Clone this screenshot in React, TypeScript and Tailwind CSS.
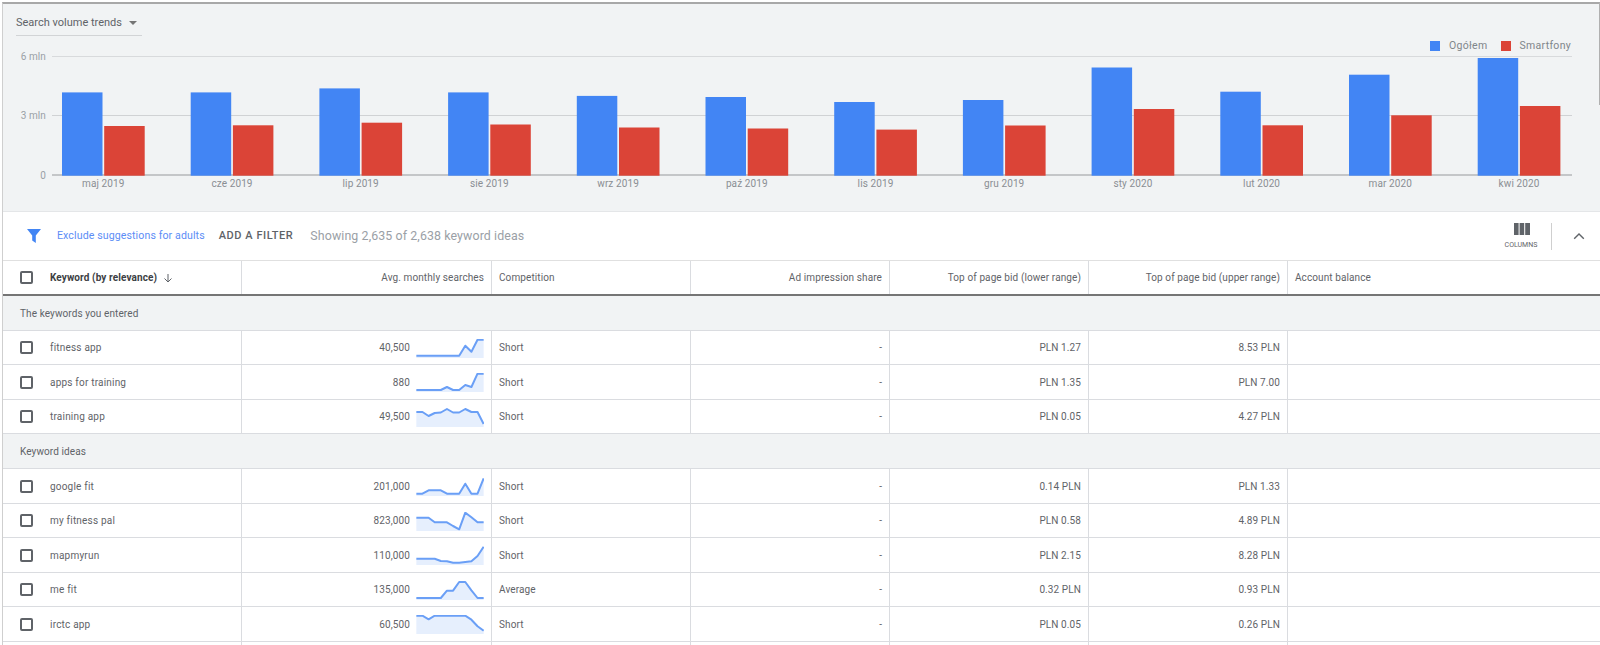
import React from "react";

const months = ["maj 2019", "cze 2019", "lip 2019", "sie 2019", "wrz 2019", "paź 2019", "lis 2019", "gru 2019", "sty 2020", "lut 2020", "mar 2020", "kwi 2020"];
const blueTops = [92.4, 92.4, 88.4, 92.4, 95.9, 97, 102, 100, 67.5, 91.7, 74.7, 58];
const redTops = [126, 125.3, 122.7, 124.5, 127.5, 128.5, 129.6, 125.5, 109, 125.3, 115.3, 106];
const BASE = 175.7;

const gridCols = "grid grid-cols-[239px_250px_199px_199px_199px_199px_1fr]";

type Row = { k: string; n: string; s: number[]; c: string; a: string; lo: string; hi: string };

const first: Row[] = [
  { k: "fitness app", n: "40,500", s: [16.7, 16.7, 16.7, 16.7, 16.7, 16.7, 16.7, 16.7, 6.7, 12.7, 0.7, 0.7], c: "Short", a: "-", lo: "PLN 1.27", hi: "8.53 PLN" },
  { k: "apps for training", n: "880", s: [17, 17, 17, 17, 17, 14, 17, 17, 12, 14, 0.7, 0.7], c: "Short", a: "-", lo: "PLN 1.35", hi: "PLN 7.00" },
  { k: "training app", n: "49,500", s: [4, 4, 8, 5, 4.5, 1, 4.5, 4.5, 1, 4, 4, 16], c: "Short", a: "-", lo: "PLN 0.05", hi: "4.27 PLN" },
];
const ideas: Row[] = [
  { k: "google fit", n: "201,000", s: [16.7, 16.7, 13.3, 13.3, 13.3, 16.7, 16.7, 16.7, 6.7, 16.7, 16.7, 1.3], c: "Short", a: "-", lo: "0.14 PLN", hi: "PLN 1.33" },
  { k: "my fitness pal", n: "823,000", s: [5.7, 5.7, 5.7, 10.3, 10.3, 10.3, 14, 17.3, 0.7, 5.3, 10.3, 10.3], c: "Short", a: "-", lo: "PLN 0.58", hi: "4.89 PLN" },
  { k: "mapmyrun", n: "110,000", s: [12.7, 12.7, 12.7, 12.7, 15, 15.3, 16.7, 16.7, 16, 15.3, 10, 0.7], c: "Short", a: "-", lo: "PLN 2.15", hi: "8.28 PLN" },
  { k: "me fit", n: "135,000", s: [17, 17, 17, 17, 17, 9.7, 9.7, 1, 1, 9.3, 17, 17], c: "Average", a: "-", lo: "0.32 PLN", hi: "0.93 PLN" },
  { k: "irctc app", n: "60,500", s: [0.7, 0.7, 4.3, 0.7, 0.7, 0.7, 0.7, 0.7, 0.7, 4.7, 11.3, 15.7], c: "Short", a: "-", lo: "PLN 0.05", hi: "0.26 PLN" },
];

function Check() {
  return <span className="block w-[13px] h-[13px] border-2 border-[#5f6368] rounded-[2px] bg-white shrink-0" />;
}

function Spark({ v }: { v: number[] }) {
  const pts = v.map((y, i) => `${(i * 67.3) / 11},${y}`).join(" ");
  return (
    <svg width="68" height="19" viewBox="0 0 67.3 19" className="shrink-0 block mt-[1px]">
      <polygon points={`0,19 ${pts} 67.3,19`} fill="#e6effd" />
      <polyline points={pts} fill="none" stroke="#6a9ff6" strokeWidth="2" strokeLinejoin="round" />
    </svg>
  );
}

function DataRow({ r }: { r: Row }) {
  const cell = "flex items-center border-r border-[#dadce0] min-w-0 pt-[0.6px]";
  return (
    <div className={`${gridCols} h-[34.6px] border-b border-[#dadce0] text-[#5f6368]`}>
      <div className={`${cell} pl-[17px] gap-[17px]`}>
        <Check />
        <span className="tracking-[0.2px]">{r.k}</span>
      </div>
      <div className={`${cell} justify-end pr-[7px] gap-[6px]`}>
        <span>{r.n}</span>
        <Spark v={r.s} />
      </div>
      <div className={`${cell} pl-[7px]`}>{r.c}</div>
      <div className={`${cell} justify-end pr-[7px]`}>{r.a}</div>
      <div className={`${cell} justify-end pr-[7px]`}>{r.lo}</div>
      <div className={`${cell} justify-end pr-[7px]`}>{r.hi}</div>
      <div />
    </div>
  );
}

function GroupRow({ label }: { label: string }) {
  return (
    <div className="h-[34.6px] bg-[#f1f3f4] border-b border-[#dadce0] flex items-center pl-[17px] pt-[1.5px] text-[#5f6368]">
      {label}
    </div>
  );
}

export default function App() {
  const head = "flex items-center border-r border-[#dadce0]";
  return (
    <div className="relative h-[645px] w-full overflow-hidden bg-white pt-[2px] font-['Roboto',sans-serif] text-[10px] tracking-[0.1px]">
      <div className="border-t-2 border-t-[#a8a8a8] border-l border-l-[#cfcfcf] ml-[2px] h-[643px] overflow-hidden">
        {/* Chart panel */}
        <section className="bg-[#f1f3f4] h-[208px] border-b border-[#e4e6e8]">
          <div className="ml-[13px] w-[126px] h-[32px] border-b border-[#d2d4d6] flex items-center gap-[7px] text-[11px] text-[#5f6368] tracking-normal pt-[7px]">
            <span>Search volume trends</span>
            <svg width="8" height="4" viewBox="0 0 8 4" className="block">
              <path d="M0 0h8L4 4z" fill="#757575" />
            </svg>
          </div>
          <div className="h-[18px] flex items-center justify-end pr-[29px] text-[#80868b] text-[10.5px] tracking-[0.3px] gap-[9px] pt-[2px]">
            <span className="flex items-center gap-[9px]">
              <span className="block w-[10px] h-[10px] bg-[#4285f4]" />
              Ogółem
            </span>
            <span className="flex items-center gap-[8px] ml-[5px]">
              <span className="block w-[10px] h-[10px] bg-[#db4437]" />
              Smartfony
            </span>
          </div>
          <svg width="1597" height="157" viewBox="3 54 1597 157" className="block overflow-visible">
            <line x1="52" x2="1572" y1="56.5" y2="56.5" stroke="#d8dadc" />
            <line x1="52" x2="1572" y1="115.5" y2="115.5" stroke="#d0d2d4" />
            <line x1="52" x2="1572" y1="175" y2="175" stroke="#c4c6c8" strokeWidth="2" />
            {[["6 mln", 56], ["3 mln", 115], ["0", 175]].map(([t, y]) => (
              <text key={t as string} x="46" y={(y as number) + 3.5} textAnchor="end" fontSize="10" fill="#9aa0a6" fontFamily="Roboto, sans-serif">
                {t}
              </text>
            ))}
            {months.map((m, i) => {
              const x = 62 + i * 128.7;
              return (
                <g key={m}>
                  <rect x={x} y={blueTops[i]} width="40.5" height={BASE - blueTops[i]} fill="#4285f4" />
                  <rect x={x + 42.2} y={redTops[i]} width="40.5" height={BASE - redTops[i]} fill="#db4437" />
                  <text x={x + 41.3} y="187" textAnchor="middle" fontSize="10" letterSpacing="0.1" fill="#8a8e93" fontFamily="Roboto, sans-serif">
                    {m}
                  </text>
                </g>
              );
            })}
          </svg>
        </section>

        {/* Filter bar */}
        <div className="h-[49px] border-b border-[#e0e0e0] flex items-center pl-[24px] pr-[15px] bg-white">
          <svg width="14" height="14" viewBox="0 0 14 14" className="block shrink-0 -mt-[1px]">
            <path d="M0 0h14L8.8 6.6V14L5.2 11.6V6.6z" fill="#4285f4" />
          </svg>
          <span className="ml-[16px] text-[10.6px] text-[#5c8df6]">Exclude suggestions for adults</span>
          <span className="ml-[14px] text-[11px] font-medium tracking-[0.55px] text-[#5f6368]">ADD A FILTER</span>
          <span className="ml-[17px] text-[12.4px] text-[#9aa0a6] tracking-[0.1px]">Showing 2,635 of 2,638 keyword ideas</span>
          <div className="ml-auto flex items-center">
            <div className="flex flex-col items-center w-[34px]">
              <svg width="16" height="12" viewBox="0 0 16 12" className="block ml-[2px]">
                <path d="M0 0h4.6v12H0zM5.6 0h4.6v12H5.6zM11.2 0H16v12h-4.8z" fill="#5f6368" />
              </svg>
              <span className="mt-[7px] text-[7px] leading-none text-[#5f6368] tracking-normal">COLUMNS</span>
            </div>
            <div className="w-[1px] h-[27px] bg-[#cfcfcf] ml-[13px]" />
            <svg width="12" height="8" viewBox="0 0 12 8" className="block ml-[21px] -mt-[1px]">
              <path d="M1.2 6.8 6 2l4.8 4.8" fill="none" stroke="#5f6368" strokeWidth="1.4" />
            </svg>
          </div>
        </div>

        {/* Table header */}
        <div className={`${gridCols} h-[35px] border-b-2 border-[#757575] text-[#5f6368]`}>
          <div className={`${head} pl-[17px] gap-[17px] font-bold text-[#3c4043]`}>
            <Check />
            <span className="flex items-center gap-[6px]">
              Keyword (by relevance)
              <svg width="10" height="10" viewBox="0 0 10 10" className="block">
                <path d="M5 1v8M1.5 5.5 5 9l3.5-3.5" fill="none" stroke="#5f6368" strokeWidth="1" />
              </svg>
            </span>
          </div>
          <div className={`${head} justify-end pr-[7px]`}>Avg. monthly searches</div>
          <div className={`${head} pl-[7px]`}>Competition</div>
          <div className={`${head} justify-end pr-[7px]`}>Ad impression share</div>
          <div className={`${head} justify-end pr-[7px]`}>Top of page bid (lower range)</div>
          <div className={`${head} justify-end pr-[7px]`}>Top of page bid (upper range)</div>
          <div className="flex items-center pl-[7px]">Account balance</div>
        </div>

        <GroupRow label="The keywords you entered" />
        {first.map((r) => (
          <DataRow key={r.k} r={r} />
        ))}
        <GroupRow label="Keyword ideas" />
        {ideas.map((r) => (
          <DataRow key={r.k} r={r} />
        ))}
        <div className={`${gridCols} h-[20px]`}>
          {[0, 1, 2, 3, 4, 5].map((i) => (
            <div key={i} className="border-r border-[#dadce0]" />
          ))}
        </div>
      </div>
      {/* scrollbar thumb */}
      <div className="absolute right-0 top-[3px] w-[1px] h-[102px] bg-[#b0b0b0]" />
    </div>
  );
}
